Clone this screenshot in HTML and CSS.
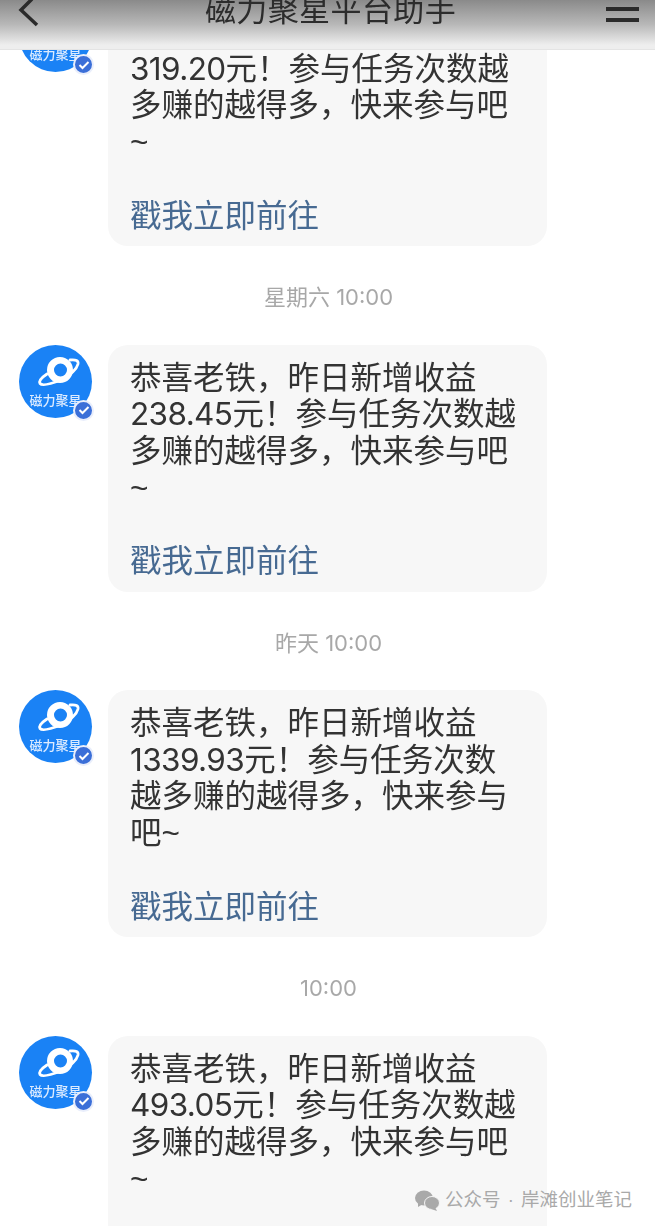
FILE: index.html
```html
<!DOCTYPE html>
<html lang="zh-CN">
<head>
<meta charset="UTF-8">
<title>磁力聚星平台助手</title>
<link rel="stylesheet" href="styles.css">
</head>
<body>

<svg class="defs" width="0" height="0">
  <symbol id="planet" viewBox="0 0 73 48">
    <path d="M28 25 A13 13 0 1 1 54 25 A13 13 0 1 1 28 25 Z M35 25 A6.500 6.500 0 1 0 48 25 A6.500 6.500 0 1 0 35 25 Z" fill="#fff" fill-rule="evenodd"/>
    <path d="M28 29 Q19 35 21 38.500 Q24 42 42 35 Q57 27 59 19 Q60 14 51 15" fill="none" stroke="#fff" stroke-width="2.800" stroke-linecap="round"/>
  </symbol>
</svg>

<div class="page">
  <div class="header">
    <svg class="back" width="30" height="30" viewBox="0 0 30 30"><path d="M16 -1 L5 10 L21 25" fill="none" stroke="#2b2b2b" stroke-width="3.500"/></svg>
    <div class="title">磁力聚星平台助手</div>
    <div class="menu"><span></span><span></span><span></span></div>
  </div>

  <div class="feed">
    <div class="msg">
      <div class="avatar">
        <svg class="planet"><use href="#planet"/></svg>
        <div class="avatar-name">磁力聚星</div>
        <div class="badge"><svg width="12" height="10" viewBox="0 0 12 10"><path d="M1.500 5 L4.500 8 L10.500 2" fill="none" stroke="#fff" stroke-width="2"/></svg></div>
      </div>
      <div class="bubble">
        <div class="text">恭喜老铁，昨日新增收益<span class="num">319.20</span>元！参与任务次数越多赚的越得多，快来参与吧~</div>
        <div class="link">戳我立即前往</div>
      </div>
    </div>

    <div class="time">星期六 10:00</div>

    <div class="msg">
      <div class="avatar">
        <svg class="planet"><use href="#planet"/></svg>
        <div class="avatar-name">磁力聚星</div>
        <div class="badge"><svg width="12" height="10" viewBox="0 0 12 10"><path d="M1.500 5 L4.500 8 L10.500 2" fill="none" stroke="#fff" stroke-width="2"/></svg></div>
      </div>
      <div class="bubble">
        <div class="text">恭喜老铁，昨日新增收益<span class="num">238.45</span>元！参与任务次数越多赚的越得多，快来参与吧~</div>
        <div class="link">戳我立即前往</div>
      </div>
    </div>

    <div class="time">昨天 10:00</div>

    <div class="msg">
      <div class="avatar">
        <svg class="planet"><use href="#planet"/></svg>
        <div class="avatar-name">磁力聚星</div>
        <div class="badge"><svg width="12" height="10" viewBox="0 0 12 10"><path d="M1.500 5 L4.500 8 L10.500 2" fill="none" stroke="#fff" stroke-width="2"/></svg></div>
      </div>
      <div class="bubble">
        <div class="text">恭喜老铁，昨日新增收益<span class="num">1339.93</span>元！参与任务次数越多赚的越得多，快来参与吧~</div>
        <div class="link">戳我立即前往</div>
      </div>
    </div>

    <div class="time">10:00</div>

    <div class="msg">
      <div class="avatar">
        <svg class="planet"><use href="#planet"/></svg>
        <div class="avatar-name">磁力聚星</div>
        <div class="badge"><svg width="12" height="10" viewBox="0 0 12 10"><path d="M1.500 5 L4.500 8 L10.500 2" fill="none" stroke="#fff" stroke-width="2"/></svg></div>
      </div>
      <div class="bubble">
        <div class="text">恭喜老铁，昨日新增收益<span class="num">493.05</span>元！参与任务次数越多赚的越得多，快来参与吧~</div>
        <div class="link">戳我立即前往</div>
      </div>
    </div>
  </div>

  <div class="watermark">
    <svg width="25" height="21" viewBox="0 0 25 21">
      <ellipse cx="9" cy="8" rx="9" ry="7.500" fill="#a9a9a9"/>
      <path d="M3 12 L3 17 L8 14 Z" fill="#a9a9a9"/>
      <ellipse cx="17" cy="13" rx="7.500" ry="6.500" fill="#a9a9a9" stroke="#f5f5f5" stroke-width="1"/>
      <path d="M20 17 L22 21 L16 19 Z" fill="#a9a9a9"/>
    </svg>
    <span>公众号 · 岸滩创业笔记</span>
  </div>
</div>

</body>
</html>
```

FILE: styles.css
```css
html, body {
  margin: 0;
  padding: 0;
  background: #fff;
}
.defs {
  position: absolute;
}
.page {
  position: relative;
  height: 100vh;
  overflow: hidden;
  font-family: "Liberation Sans", "Noto Sans CJK SC", sans-serif;
  color: #333;
}
.header {
  position: absolute;
  top: 0;
  left: 0;
  right: 0;
  z-index: 2;
  height: 50px;
  display: flex;
  align-items: flex-start;
  justify-content: space-between;
  padding: 0 16px;
  box-sizing: border-box;
  background: linear-gradient(#8a8a8a, #b8b8b8 50%, #eeeeee 92%);
  border-bottom: 1px solid #e4e4e4;
}
.back {
  flex: none;
}
.title {
  font-size: 31px;
  line-height: 31px;
  margin-top: -5px;
  margin-left: 9px;
  letter-spacing: 0.400px;
  color: #2c2c2c;
  filter: blur(0.5px);
}
.menu {
  width: 33px;
  margin-top: -4px;
}
.menu span {
  display: block;
  height: 4px;
  background: #2b2b2b;
  margin-bottom: 7px;
}
.feed {
  margin-top: -1px;
  filter: blur(0.4px);
}
.msg {
  display: flex;
  align-items: flex-start;
  gap: 16px;
  padding-left: 19px;
}
.avatar {
  position: relative;
  flex: none;
  width: 73px;
  height: 73px;
  border-radius: 50%;
  background: #1a82f5;
  text-align: center;
}
.planet {
  display: block;
  width: 73px;
  height: 48px;
}
.avatar-name {
  color: #dcebff;
  font-size: 13px;
  font-weight: 500;
  line-height: 15px;
  margin-top: 0;
}
.badge {
  position: absolute;
  right: -2px;
  bottom: -3px;
  width: 17px;
  height: 17px;
  border: 2px solid #e9eefb;
  border-radius: 50%;
  background: #3b6fd8;
  display: flex;
  align-items: center;
  justify-content: center;
}
.bubble {
  width: 395px;
  padding: 15px 22px 12px;
  background: #f7f7f7;
  border-radius: 20px;
  font-size: 31.500px;
  line-height: 36.700px;
}
.num {
  font-family: Inter, "Liberation Sans", sans-serif;
  letter-spacing: -0.600px;
}
.link {
  margin-top: 36.700px;
  color: #476a92;
}
.time {
  margin: 33px 0 29px 2px;
  height: 36.300px;
  line-height: 36.300px;
  text-align: center;
  font-family: Inter, "Noto Sans CJK SC", sans-serif;
  font-size: 22px;
  color: #a8a8a8;
}
.watermark {
  position: absolute;
  left: 415px;
  top: 1189px;
  display: flex;
  align-items: center;
  gap: 5px;
  font-size: 18.500px;
  word-spacing: 2px;
  line-height: 22px;
  color: #a9a9a9;
  white-space: nowrap;
}
```
